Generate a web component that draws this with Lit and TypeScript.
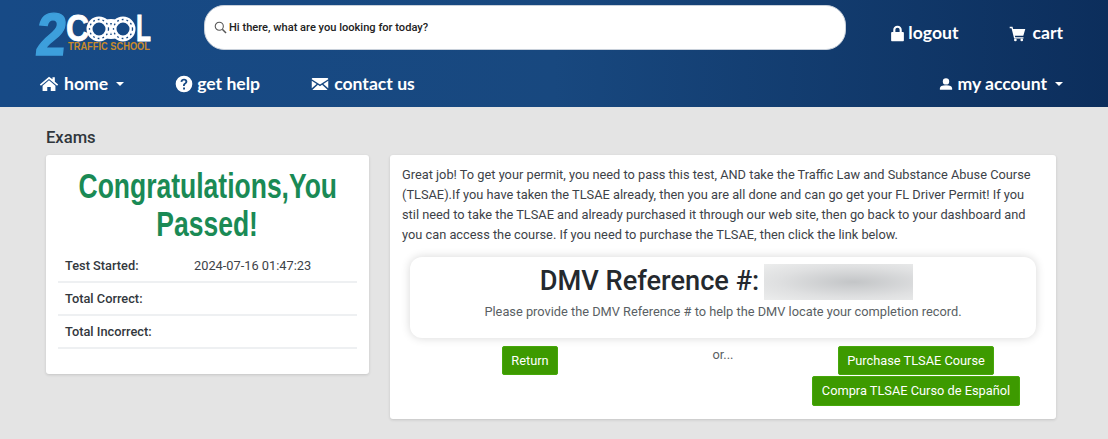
import { LitElement, html, css, svg } from "lit";
import { customElement } from "lit/decorators.js";

const icons = {
  home: svg`<path d="M12 3.200 1 12.600l1.300 1.500L12 5.900l9.700 8.200 1.300-1.500-4-3.400V4h-2.800v2.300z"/><path d="M12 7.600 4.300 14v6.400h5.600v-4.800h4.200v4.800h5.600V14z"/>`,
  help: svg`<path fill-rule="evenodd" d="M12 2a10 10 0 1 0 0 20 10 10 0 0 0 0-20zm-1.100 14.300h2.300v2.200h-2.300zM12 5.700c2.400 0 4 1.400 4 3.400 0 1.500-.8 2.300-1.800 3-1 .7-1.200 1-1.200 2.200h-2.200c0-1.800.5-2.500 1.700-3.400.8-.6 1.200-1 1.200-1.700 0-.8-.7-1.400-1.700-1.400-1.100 0-1.800.6-2 1.700L7.800 9.200C8.100 7 9.700 5.700 12 5.700z"/>`,
  mail: svg`<path d="M1 5.200C1 4.500 1.500 4 2.200 4h19.600c.7 0 1.200.5 1.200 1.200v.4l-11 7.200L1 5.600z"/><path d="M1 7.700v10l6.500-5.700zM23 7.700v10L16.500 12zM9.200 13.100 2 19.500c.1.300.4.500.8.500h18.400c.4 0 .7-.2.8-.5l-7.200-6.400L12 15z"/>`,
  user: svg`<circle cx="12" cy="7.500" r="5.500"/><path d="M1.500 22v-2.500c0-3.500 3.500-5.500 10.500-5.500s10.500 2 10.500 5.500V22z"/>`,
  lock: svg`<path fill-rule="evenodd" d="M12 1C8.300 1 6 3.500 6 7v3H4.500C3.600 10 3 10.600 3 11.500v10c0 .9.600 1.500 1.500 1.500h15c.9 0 1.500-.6 1.500-1.500v-10c0-.9-.6-1.500-1.500-1.500H18V7c0-3.500-2.300-6-6-6zm0 3c1.800 0 3 1.200 3 3.200V10H9V7.200C9 5.200 10.200 4 12 4z"/>`,
  cart: svg`<path d="M1 2.500h4l.8 3H23l-2.800 9.700H8.300l.5 2h11.700v2H7.200L3.600 4.500H1z"/><circle cx="9" cy="21" r="1.900"/><circle cx="18" cy="21" r="1.900"/>`,
};

function icon(name: keyof typeof icons, cls: string) {
  return html`<svg class=${cls} viewBox="0 0 24 24" fill="currentColor" aria-hidden="true">${icons[name]}</svg>`;
}

@customElement("app-logo")
class AppLogo extends LitElement {
  static styles = css`
    :host { display: block; width: 116px; height: 44px; }
    svg { display: block; overflow: visible; }
    .two { font: 700 60px "Liberation Sans", sans-serif; fill: #3d9fdc; stroke: #3d9fdc; stroke-width: 1.500px; }
    .big { font: 700 36px "Liberation Sans", sans-serif; fill: #fff; stroke: #fff; stroke-width: .8px; }
    .sub { font: 700 10px "Liberation Sans", sans-serif; fill: #c98a2b; }
  `;
  render() {
    return html`<svg width="116" height="44" viewBox="0 0 116 44">
      <text class="two" x="4" y="43" textLength="30" lengthAdjust="spacingAndGlyphs" transform="skewX(-6)">2</text>
      <text class="big" x="31" y="29" textLength="23" lengthAdjust="spacingAndGlyphs">C</text>
      <g fill="none" stroke="#fff" stroke-width="6">
        <circle cx="64" cy="17" r="9.500"/>
        <circle cx="88" cy="17" r="9.500"/>
        <path d="M70.500 10c3-1 8-1 11 0M70.500 24c3 1 8 1 11 0" stroke-width="4"/>
      </g>
      <g fill="none" stroke="#174a86" stroke-width="1.300" stroke-dasharray="1.800 3">
        <circle cx="64" cy="17" r="9.500"/>
        <circle cx="88" cy="17" r="9.500"/>
      </g>
      <text class="big" x="101" y="29" textLength="15" lengthAdjust="spacingAndGlyphs">L</text>
      <text class="sub" x="33" y="38" textLength="82" lengthAdjust="spacingAndGlyphs">TRAFFIC SCHOOL</text>
    </svg>`;
  }
}

@customElement("app-root")
export class AppRoot extends LitElement {
  static styles = css`
    :host { display: block; min-height: 439px; background: #e4e4e4; font-family: Roboto, "Liberation Sans", sans-serif; color: #3d4248; }
    * { box-sizing: border-box; }
    header { height: 107px; background: linear-gradient(90deg, #174a86 0%, #18487f 50%, #0c2e5c 100%); color: #fff; padding: 5px 45px 0 35px; }
    .top { display: flex; align-items: flex-start; height: 57px; }
    .logo { margin-top: 7px; width: 169px; flex: none; }
    .search { width: 642px; height: 45px; flex: none; background: #fff; border-radius: 20px; border: 1px solid #c8d0da; display: flex; align-items: center; gap: 2px; padding-left: 9px; color: #222; font-size: 11.100px; font-weight: 500; }
    .search svg { width: 13px; height: 13px; flex: none; }
    .links { flex: 1; display: flex; justify-content: flex-end; gap: 51px; margin-top: 15px; }
    .link { display: flex; align-items: center; font: 700 17.600px/26px Lato, "Liberation Sans", sans-serif; color: #fff; white-space: nowrap; }
    .bottom { display: flex; align-items: center; height: 28px; padding-left: 4px; margin-top: 8px; }
    .bottom .link + .link { margin-left: 51px; }
    .bottom .link.help { margin-left: 50px; }
    .spacer { flex: 1; }
    .i { width: 20px; height: 20px; margin-right: 3px; flex: none; }
    .i.lock { width: 17px; height: 19px; margin-right: 2px; }
    .i.cart { width: 17px; height: 17px; margin-right: 6px; }
    .i.mail { width: 18px; height: 18px; margin-right: 5px; }
    .i.user { width: 14px; height: 14px; margin-right: 4px; }
    .i.home { width: 20px; height: 20px; margin-right: 5px; }
    .caret { width: 0; height: 0; border: 4px solid transparent; border-top-color: #fff; border-bottom: 0; margin-left: 8px; }
    main { padding: 22px 52px 0 46px; }
    h2 { margin: 0 0 8px; font-size: 16.600px; line-height: 18px; font-weight: 500; color: #30363c; }
    .grid { display: grid; grid-template-columns: 323px 666px; gap: 21px; align-items: start; }
    .card { background: #fff; border-radius: 3px; box-shadow: 0 1px 3px rgba(0,0,0,.14); }
    .left { height: 219px; padding: 12px 12px 0; }
    h1 { margin: 0 0 7px; font: 700 35px/38px "Liberation Sans", sans-serif; color: #1a8a55; white-space: nowrap; display: flex; flex-direction: column; align-items: center; }
    h1 span { display: block; transform: scaleX(.757); }
    .row { display: grid; grid-template-columns: 129px 1fr; height: 33px; align-items: center; padding: 0 7px; border-bottom: 2px solid #eef0f2; font-size: 12.800px; color: #3d4248; }
    .row b { font-weight: 500; color: #33383d; }
    .right { height: 264px; padding: 10px 12px 0; }
    p { margin: 0; font-size: 12.800px; line-height: 20px; color: #3d4248; }
    .ref { margin: 12px 8px 8px; height: 81px; background: #fff; border-radius: 12px; box-shadow: 0 0 10px rgba(0,0,0,.16); display: flex; flex-direction: column; align-items: center; padding-top: 6px; }
    .refline { display: flex; align-items: center; gap: 5px; margin-left: 7px; font-size: 27.200px; line-height: 36px; font-weight: 500; color: #24292e; }
    .reftext { padding-bottom: 2px; }
    .blur { width: 149px; height: 36px; background: radial-gradient(ellipse at 60% 50%, #c3c5c7 0%, #dfe0e1 60%, #eceded 100%); }
    .ref small { display: block; margin-top: 2px; font-size: 12.800px; line-height: 18px; color: #5a5f64; }
    .actions { display: grid; grid-template-columns: repeat(3, 193px); justify-content: center; }
    .col { display: flex; flex-direction: column; align-items: center; gap: 1px; white-space: nowrap; }
    .or { font-size: 12.800px; line-height: 18px; color: #5a5f64; }
    .btn { height: 29px; padding: 0 8.600px; background: #3d9a00; border: 1px solid #46a80a; border-radius: 2px; color: #fff; font: 400 12.800px/27px Roboto, sans-serif; flex: none; }
    .btn.wide { height: 30px; line-height: 28px; }
  `;

  render() {
    return html`
      <header>
        <div class="top">
          <div class="logo"><app-logo></app-logo></div>
          <div class="search">
            <svg viewBox="0 0 16 16" fill="none" stroke="#555" stroke-width="1.300"><circle cx="6.500" cy="6.500" r="5"/><path d="m10.200 10.200 4.600 4.600" stroke-width="1.800"/></svg>
            <span>Hi there, what are you looking for today?</span>
          </div>
          <div class="links">
            <span class="link">${icon("lock", "i lock")}logout</span>
            <span class="link">${icon("cart", "i cart")}cart</span>
          </div>
        </div>
        <nav class="bottom">
          <span class="link">${icon("home", "i home")}home<span class="caret"></span></span>
          <span class="link help">${icon("help", "i")}get help</span>
          <span class="link">${icon("mail", "i mail")}contact us</span>
          <span class="spacer"></span>
          <span class="link">${icon("user", "i user")}my account<span class="caret"></span></span>
        </nav>
      </header>
      <main>
        <h2>Exams</h2>
        <div class="grid">
          <section class="card left">
            <h1><span>Congratulations,You</span><span>Passed!</span></h1>
            <div class="row"><b>Test Started:</b><span>2024-07-16 01:47:23</span></div>
            <div class="row"><b>Total Correct:</b><span></span></div>
            <div class="row"><b>Total Incorrect:</b><span></span></div>
          </section>
          <section class="card right">
            <p>Great job! To get your permit, you need to pass this test, AND take the Traffic Law and Substance Abuse Course (TLSAE).If you have taken the TLSAE already, then you are all done and can go get your FL Driver Permit! If you stil need to take the TLSAE and already purchased it through our web site, then go back to your dashboard and you can access the course. If you need to purchase the TLSAE, then click the link below.</p>
            <div class="ref">
              <div class="refline"><span class="reftext">DMV Reference #:</span><span class="blur"></span></div>
              <small>Please provide the DMV Reference # to help the DMV locate your completion record.</small>
            </div>
            <div class="actions">
              <div class="col"><span class="btn">Return</span></div>
              <div class="col"><span class="or">or...</span></div>
              <div class="col"><span class="btn">Purchase TLSAE Course</span><span class="btn wide">Compra TLSAE Curso de Español</span></div>
            </div>
          </section>
        </div>
      </main>
    `;
  }
}
